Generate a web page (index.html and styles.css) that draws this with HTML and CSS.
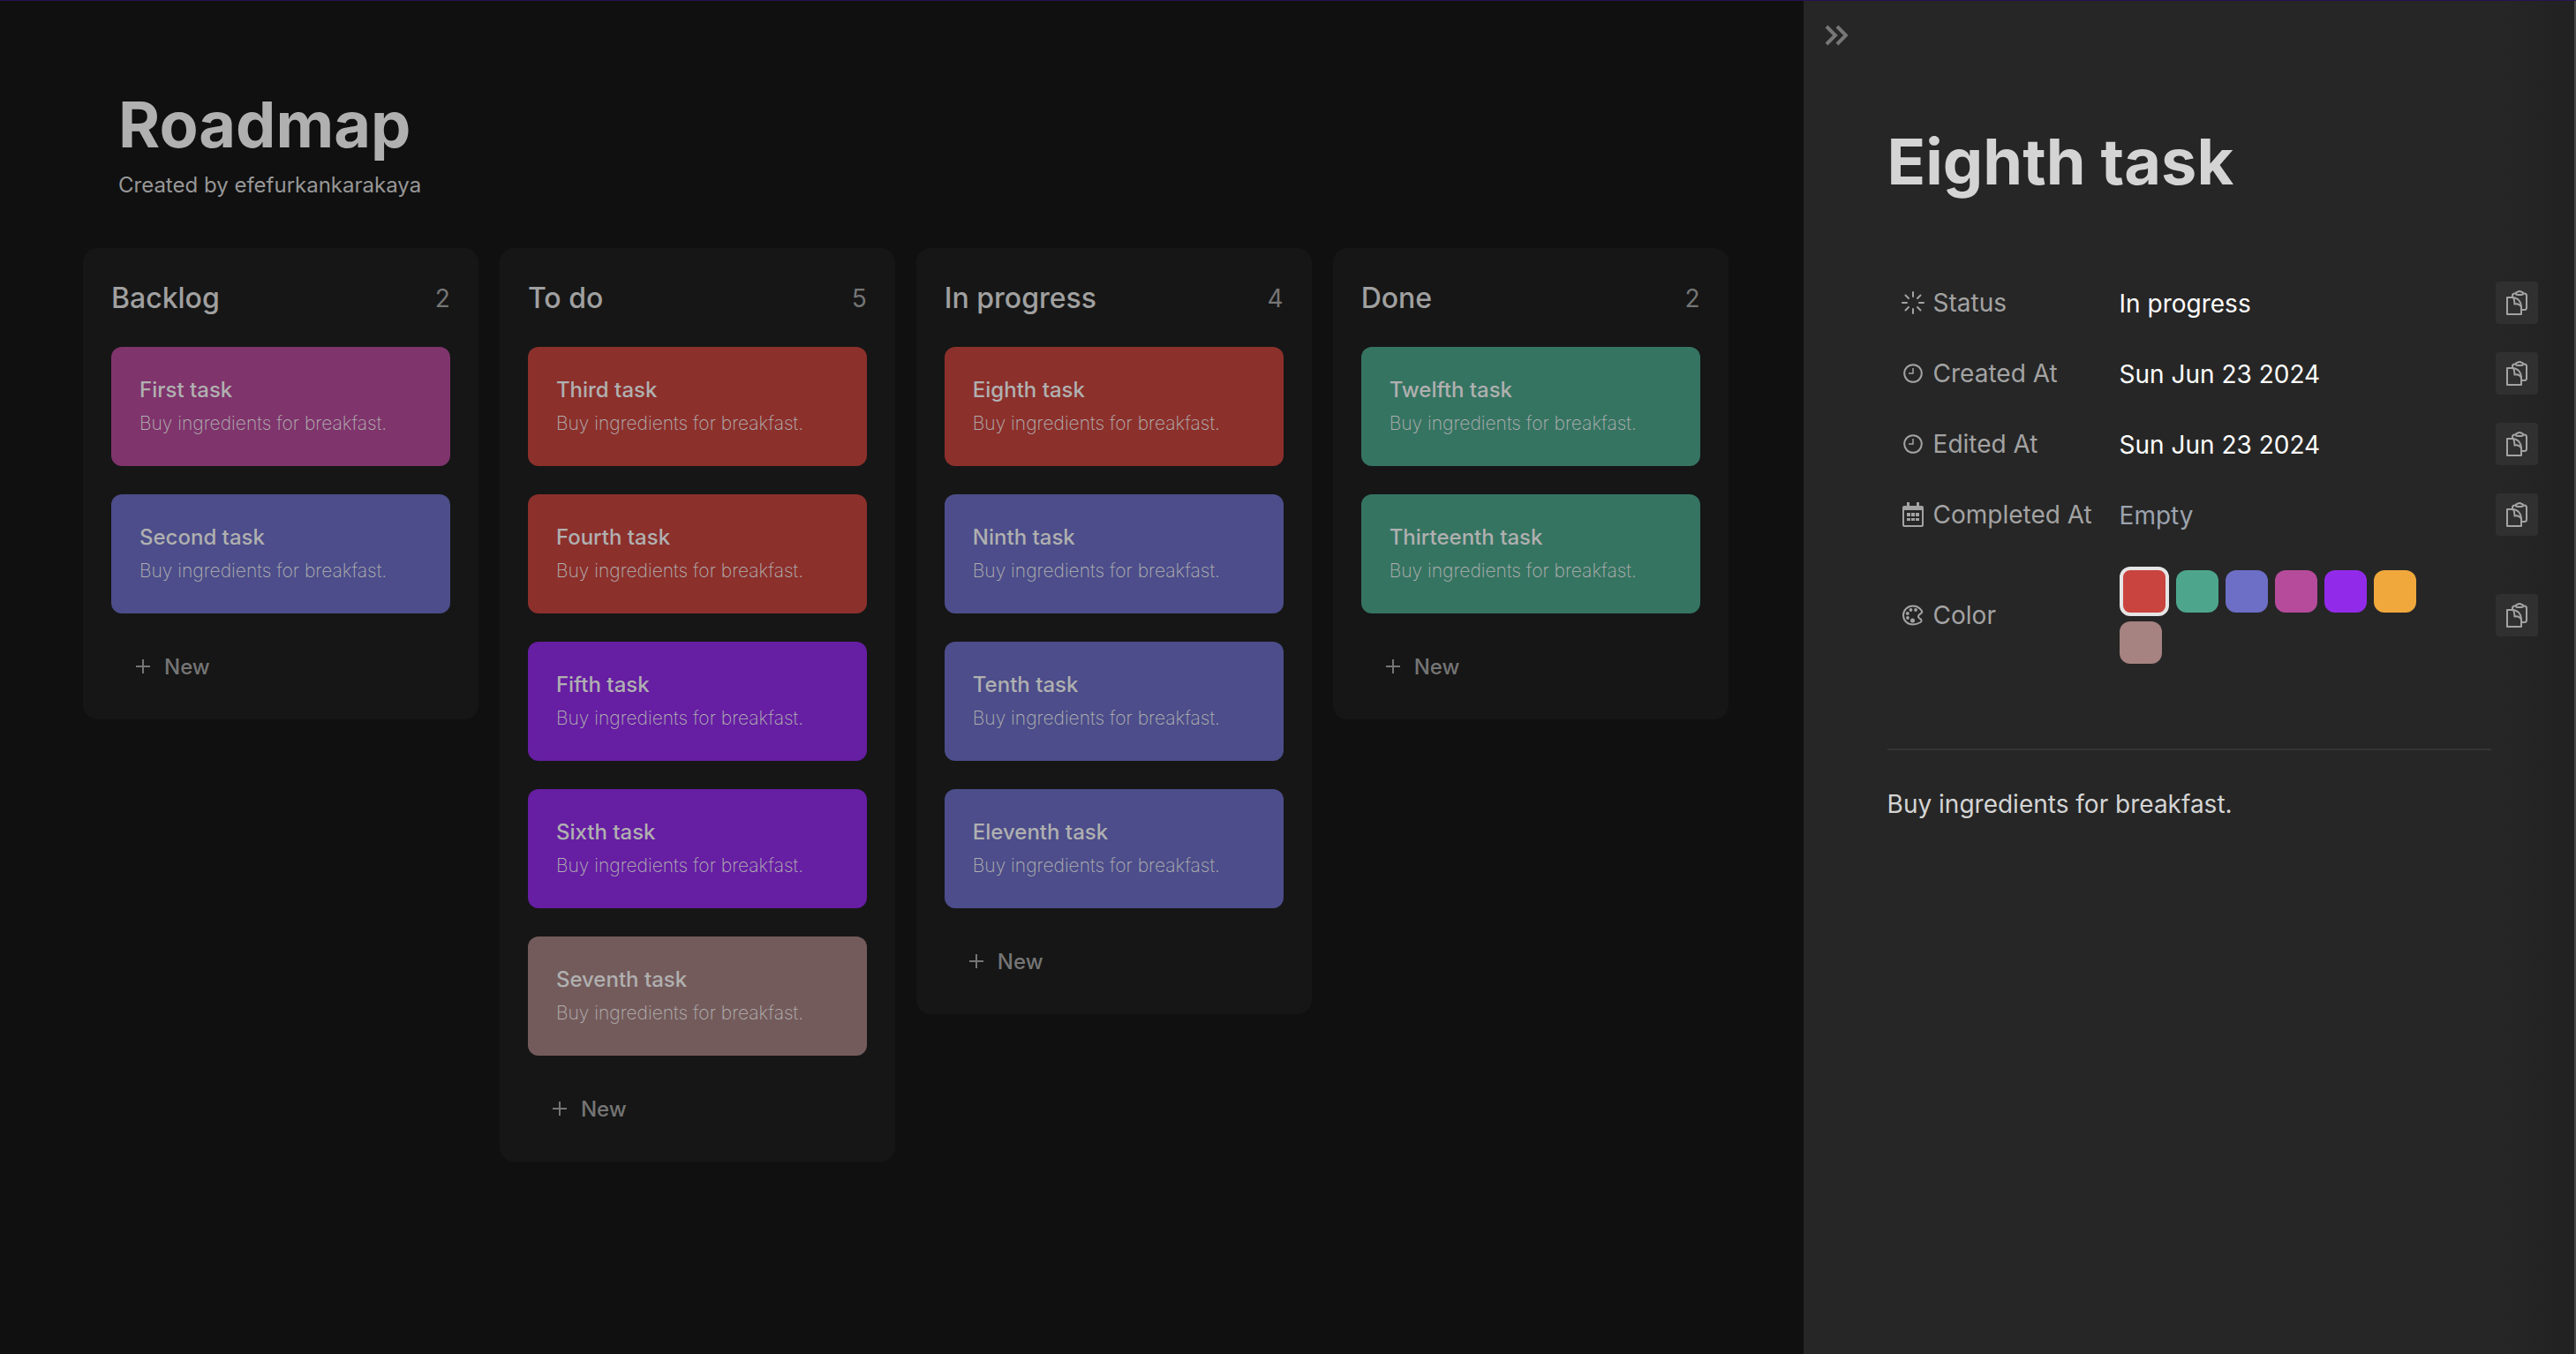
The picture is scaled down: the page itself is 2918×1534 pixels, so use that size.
FILE: index.html
```html
<!DOCTYPE html>
<html lang="en">
<head>
<meta charset="utf-8">
<title>Roadmap</title>
<link rel="stylesheet" href="styles.css">
</head>
<body>
<svg class="sprite" aria-hidden="true">
  <symbol id="plus" viewBox="0 0 16 16"><path d="M8 0v16M0 8h16" fill="none" stroke="currentColor" stroke-width="2"/></symbol>
  <symbol id="clock" viewBox="0 0 26 26"><circle cx="13" cy="13" r="9.800" fill="none" stroke="currentColor" stroke-width="2"/><path d="M13 7v6H8" fill="none" stroke="currentColor" stroke-width="1.500"/></symbol>
  <symbol id="copy" viewBox="0 0 24 28"><g fill="none" stroke="currentColor" stroke-width="2" stroke-linejoin="round"><path d="M1 8h6c6 0 10 5 10 10.500V27H1z"/><path d="M8 8.500c1.500 1.500 1 4 1.500 7 3-.5 6 .5 7.500 3"/><path d="M7 7.500V6c0-1.700 1-2.500 2.500-2.500H11M19 3.500h1.500C22.200 3.500 23 4.400 23 6v13.500c0 1.700-1 2.500-2.500 2.500H17.500"/><path d="M11 3.500c0-1.500 1-1.700 2-1.700.5-1 3.500-1 4 0 1 0 2 .2 2 1.700S18 5 17 5h-4c-1 0-2 0-2-1.500z"/></g></symbol>
</svg>
<div class="app">
  <main class="board-page">
    <header class="page-head">
      <h1 class="title page-title">Roadmap</h1>
      <p class="byline">Created by efefurkankarakaya</p>
    </header>
    <div class="board">
      <section class="column">
        <div class="column-head"><h2>Backlog</h2><span class="count">2</span></div>
        <article class="card pink"><h3>First task</h3><p>Buy ingredients for breakfast.</p></article>
        <article class="card indigo"><h3>Second task</h3><p>Buy ingredients for breakfast.</p></article>
        <button class="new" type="button"><svg><use href="#plus"/></svg>New</button>
      </section>
      <section class="column">
        <div class="column-head"><h2>To do</h2><span class="count">5</span></div>
        <article class="card red"><h3>Third task</h3><p>Buy ingredients for breakfast.</p></article>
        <article class="card red"><h3>Fourth task</h3><p>Buy ingredients for breakfast.</p></article>
        <article class="card purple"><h3>Fifth task</h3><p>Buy ingredients for breakfast.</p></article>
        <article class="card purple"><h3>Sixth task</h3><p>Buy ingredients for breakfast.</p></article>
        <article class="card mauve"><h3>Seventh task</h3><p>Buy ingredients for breakfast.</p></article>
        <button class="new" type="button"><svg><use href="#plus"/></svg>New</button>
      </section>
      <section class="column">
        <div class="column-head"><h2>In progress</h2><span class="count">4</span></div>
        <article class="card red"><h3>Eighth task</h3><p>Buy ingredients for breakfast.</p></article>
        <article class="card indigo"><h3>Ninth task</h3><p>Buy ingredients for breakfast.</p></article>
        <article class="card indigo"><h3>Tenth task</h3><p>Buy ingredients for breakfast.</p></article>
        <article class="card indigo"><h3>Eleventh task</h3><p>Buy ingredients for breakfast.</p></article>
        <button class="new" type="button"><svg><use href="#plus"/></svg>New</button>
      </section>
      <section class="column">
        <div class="column-head"><h2>Done</h2><span class="count">2</span></div>
        <article class="card green"><h3>Twelfth task</h3><p>Buy ingredients for breakfast.</p></article>
        <article class="card green"><h3>Thirteenth task</h3><p>Buy ingredients for breakfast.</p></article>
        <button class="new" type="button"><svg><use href="#plus"/></svg>New</button>
      </section>
    </div>
  </main>

  <aside class="panel">
    <button class="close" type="button" aria-label="Close panel"><svg viewBox="0 0 26 24"><path d="M2 2l10 10L2 22M14 2l10 10-10 10" fill="none" stroke="currentColor" stroke-width="4"/></svg></button>
    <h2 class="title panel-title">Eighth task</h2>
    <div class="props">
      <div class="prop">
        <span class="label"><svg viewBox="0 0 26 26"><path d="M13 1v5M13 20v5M1 13h5M20 13h5M4.500 4.500l3.500 3.500M18 18l3.500 3.500M4.500 21.500L8 18M18 8l3.500-3.500" fill="none" stroke="currentColor" stroke-width="2" stroke-linecap="round"/></svg>Status</span>
        <span class="value">In progress</span>
        <button class="copy" type="button" aria-label="Copy status"><svg><use href="#copy"/></svg></button>
      </div>
      <div class="prop">
        <span class="label"><svg><use href="#clock"/></svg>Created At</span>
        <span class="value">Sun Jun 23 2024</span>
        <button class="copy" type="button" aria-label="Copy created date"><svg><use href="#copy"/></svg></button>
      </div>
      <div class="prop">
        <span class="label"><svg><use href="#clock"/></svg>Edited At</span>
        <span class="value">Sun Jun 23 2024</span>
        <button class="copy" type="button" aria-label="Copy edited date"><svg><use href="#copy"/></svg></button>
      </div>
      <div class="prop">
        <span class="label"><svg class="calendar" viewBox="0 0 26 28"><path fill="currentColor" fill-rule="evenodd" d="M6 0h3v4h8V0h3v4h3a2 2 0 0 1 2 2v20a2 2 0 0 1-2 2H3a2 2 0 0 1-2-2V6a2 2 0 0 1 2-2h3zM3 9v17h20V9z"/><path fill="currentColor" d="M6 12h4v4H6zm5 0h4v4h-4zm5 0h4v4h-4zM6 18h4v3H6zm5 0h4v3h-4zm5 0h4v3h-4z"/></svg>Completed At</span>
        <span class="value empty">Empty</span>
        <button class="copy" type="button" aria-label="Copy completed date"><svg><use href="#copy"/></svg></button>
      </div>
      <div class="prop color-prop">
        <span class="label"><svg viewBox="0 0 26 26"><path d="M13 2.500C7 2.500 2 7 2 13s4.500 10.500 11 10.500c3 0 5.500-.8 8.500-2.500 2-1.500 1-3.500-1-4.300-2-1-2-2.700-.5-4.200l3-2.500C24 8.500 20 2.500 13 2.500z" fill="none" stroke="currentColor" stroke-width="2"/><g fill="currentColor"><circle cx="10.500" cy="7" r="1.900"/><circle cx="16" cy="7" r="1.900"/><circle cx="6.800" cy="11" r="1.900"/><circle cx="7" cy="16" r="1.900"/><circle cx="12.500" cy="19" r="2.500"/></g></svg>Color</span>
        <span class="swatches">
          <button class="swatch s-red selected" type="button" aria-label="Red"></button>
          <button class="swatch s-green" type="button" aria-label="Green"></button>
          <button class="swatch s-indigo" type="button" aria-label="Indigo"></button>
          <button class="swatch s-pink" type="button" aria-label="Pink"></button>
          <button class="swatch s-purple" type="button" aria-label="Purple"></button>
          <button class="swatch s-orange" type="button" aria-label="Orange"></button>
          <button class="swatch s-mauve" type="button" aria-label="Mauve"></button>
        </span>
        <button class="copy" type="button" aria-label="Copy color"><svg><use href="#copy"/></svg></button>
      </div>
    </div>
    <hr class="divider">
    <p class="body-text">Buy ingredients for breakfast.</p>
  </aside>
</div>
</body>
</html>
```
FILE: styles.css
```css
* { box-sizing: border-box; }
body {
  margin: 0;
  font-family: Inter, "Liberation Sans", sans-serif;
  background: #101010;
  color: #b0b0b0;
}
h1, h2, h3, p { margin: 0; }
button { border: 0; padding: 0; background: none; color: inherit; font: inherit; }
.sprite { display: none; }
.app {
  display: grid;
  grid-template-columns: 7fr 3fr;
  min-height: 100vh;
  border-top: 1px solid #2a1150;
}
.title { font-size: 72px; line-height: 88px; font-weight: 700; }

.board-page { padding: 96px 85px 80px 94px; }
.page-head { padding-left: 40px; }
.byline { margin-top: 9px; font-size: 24px; line-height: 32px; color: #979797; }
.board {
  display: grid;
  grid-template-columns: repeat(4, 1fr);
  align-items: start;
  gap: 24px;
  margin-top: 55px;
}
.column {
  display: flex;
  flex-direction: column;
  gap: 32px;
  padding: 32px;
  border-radius: 16px;
  background: #161616;
}
.column-head { display: flex; align-items: center; justify-content: space-between; height: 48px; padding-top: 2px; }
.column-head h2 { font-size: 32px; line-height: 40px; font-weight: 500; color: #a0a0a0; }
.count { font-size: 28px; line-height: 40px; color: #757575; }
.card { padding: 33px 32px 32px; border-radius: 12px; }
.card h3 { font-size: 24px; line-height: 32px; font-weight: 500; }
.card p { margin-top: 6px; font-size: 21px; line-height: 32px; font-weight: 200; }
.pink { background: #7f346c; }
.indigo { background: #4c4d8a; }
.red { background: #8c302c; }
.purple { background: #661ea3; }
.mauve { background: #745b5b; }
.green { background: #367462; }
.new {
  display: flex;
  align-items: center;
  gap: 16px;
  height: 56px;
  padding-left: 28px;
  font-size: 24px;
  font-weight: 500;
  color: #757575;
}
.new svg { width: 16px; height: 16px; }

.panel {
  padding: 20px 41px 40px 95px;
  border-right: 2px solid #484848;
  background: linear-gradient(to left, #212121, #262626 80px);
}
.close { display: block; margin-left: -71px; width: 26px; height: 38px; color: #777; }
.close svg { display: block; width: 26px; height: 24px; }
.panel-title { margin-top: 80px; color: #d4d4d4; }
.props { display: flex; flex-direction: column; gap: 32px; margin-top: 92px; padding-left: 16px; }
.prop {
  display: grid;
  grid-template-columns: 232px 1fr 48px;
  column-gap: 15px;
  align-items: center;
  font-size: 28px;
  line-height: 40px;
}
.label { display: flex; align-items: center; gap: 10px; color: #a3a3a3; }
.label svg { width: 26px; height: 26px; }
.label .calendar { height: 28px; }
.value { padding-top: 2px; color: #fff; }
.empty { color: #9ca3af; }
.copy { display: grid; place-items: center; height: 48px; border-radius: 4px; background: #303030; color: #a3a3a3; }
.copy svg { width: 24px; height: 28px; }
.color-prop { padding-top: 3px; }
.swatches { display: flex; flex-wrap: wrap; align-items: center; gap: 6px 8px; max-width: 376px; }
.swatch { width: 48px; height: 48px; border-radius: 12px; }
.selected { width: 56px; height: 56px; border: 4px solid #e5e5e5; }
.s-red { background: #c9443e; }
.s-green { background: #4da68c; }
.s-indigo { background: #6d6ec6; }
.s-pink { background: #b54b9a; }
.s-purple { background: #922be9; }
.s-orange { background: #f0a83c; }
.s-mauve { background: #a68281; }
.divider { height: 2px; margin: 96px 53px 0 0; border: 0; background: #353535; }
.body-text { margin-top: 41px; font-size: 28px; line-height: 40px; color: #d4d4d4; }
```
